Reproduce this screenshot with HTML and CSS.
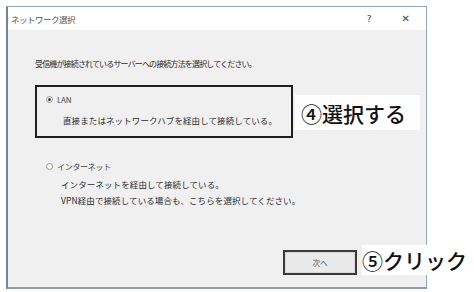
FILE: index.html
```html
<!DOCTYPE html>
<html lang="ja">
<head>
<meta charset="utf-8">
<link rel="stylesheet" href="styles.css">
</head>
<body>
<div class="stage">
  <div class="dialog">
    <div class="titlebar">
      <span class="title">ネットワーク選択</span>
      <span class="tb-btn help">?</span>
      <span class="tb-btn close">✕</span>
    </div>
    <div class="content">
      <p class="intro">受信機が接続されているサーバーへの接続方法を選択してください。</p>
      <div class="option lan">
        <div class="opt-head"><span class="radio checked"></span><span class="opt-label">LAN</span></div>
        <p class="desc">直接またはネットワークハブを経由して接続している。</p>
      </div>
      <div class="option inet">
        <div class="opt-head"><span class="radio"></span><span class="opt-label">インターネット</span></div>
        <p class="desc">インターネットを経由して接続している。</p>
        <p class="desc">VPN経由で接続している場合も、こちらを選択してください。</p>
      </div>
      <div class="footer">
        <button class="next">次へ</button>
      </div>
    </div>
  </div>
  <div class="note note4">④選択する</div>
  <div class="note note5">⑤クリック</div>
</div>
</body>
</html>
```
FILE: styles.css
```css
html, body {
  margin: 0;
  padding: 0;
  background: #ffffff;
}
body {
  font-family: "Noto Sans CJK JP", "Noto Sans", sans-serif;
  width: 474px;
  height: 292px;
  overflow: hidden;
}
.stage {
  position: relative;
  width: 474px;
  height: 292px;
  padding: 6px 0 0 6px;
  box-sizing: border-box;
}
.dialog {
  width: 421px;
  height: 283px;
  box-sizing: border-box;
  border: 1px solid #8fa7bb;
  border-left: 2px solid #6f879c;
  border-bottom: 2px solid #8a9cad;
  background: #f0f0f0;
  display: flex;
  flex-direction: column;
}
.titlebar {
  height: 23px;
  background: #ffffff;
  display: flex;
  align-items: center;
  padding-left: 3px;
  color: #555;
  flex: none;
}
.title {
  font-size: 8.5px;
  flex: 1;
  letter-spacing: -0.5px;
}
.tb-btn {
  font-family: "DejaVu Sans", sans-serif;
  font-size: 9px;
  color: #444;
}
.help { margin-right: 30px; }
.close { margin-right: 16px; font-size: 10px; }
.content {
  flex: 1;
  display: flex;
  flex-direction: column;
  padding: 28px 0 0 27px;
  color: #2a2a2a;
  font-size: 8px;
}
.intro {
  margin: 0;
  letter-spacing: -0.85px;
  line-height: 12px;
}
.option {
  box-sizing: border-box;
  width: 258px;
}
.lan {
  margin-top: 15px;
  height: 53px;
  border: 2px solid #1e1e1e;
  padding: 6px 0 0 9px;
}
.inet {
  margin-top: 20px;
  padding: 2px 0 0 11px;
  width: 320px;
}
.opt-head {
  display: flex;
  align-items: center;
  gap: 4px;
  height: 12px;
}
.opt-label {
  color: #444;
  letter-spacing: -0.3px;
}
.radio {
  width: 5px;
  height: 5px;
  border: 1px solid #999;
  border-radius: 50%;
  background: #fff;
  position: relative;
}
.radio.checked::after {
  content: "";
  position: absolute;
  left: 1px;
  top: 1px;
  width: 3px;
  height: 3px;
  border-radius: 50%;
  background: #444;
}
.desc {
  margin: 0;
  padding-left: 16px;
  line-height: 16px;
  font-size: 8.5px;
  letter-spacing: 0.1px;
  white-space: nowrap;
}
.lan .desc { margin-top: 7px; padding-left: 17px; }
.inet .desc { padding-left: 15px; }
.inet .opt-head + .desc { margin-top: 4px; }
.footer {
  margin-top: auto;
  display: flex;
  justify-content: flex-end;
  padding: 0 69px 12px 0;
}
.next {
  width: 74px;
  height: 25px;
  box-sizing: border-box;
  border: 2px solid #3a3a3a;
  background: #e9e9e9;
  box-shadow: inset 0 0 0 1px #d8d8d8;
  font-family: "Noto Sans CJK JP", sans-serif;
  font-size: 7.5px;
  color: #555;
  padding: 0;
}
.note {
  position: absolute;
  background: #ffffff;
  color: #111;
  font-size: 21px;
  font-weight: 500;
  display: flex;
  align-items: center;
}
.note4 {
  left: 295px;
  top: 95px;
  width: 125px;
  height: 35px;
  padding-left: 6px;
  box-sizing: border-box;
}
.note5 {
  left: 362px;
  top: 245px;
  width: 112px;
  height: 30px;
  padding-left: 0;
  box-sizing: border-box;
}
```
